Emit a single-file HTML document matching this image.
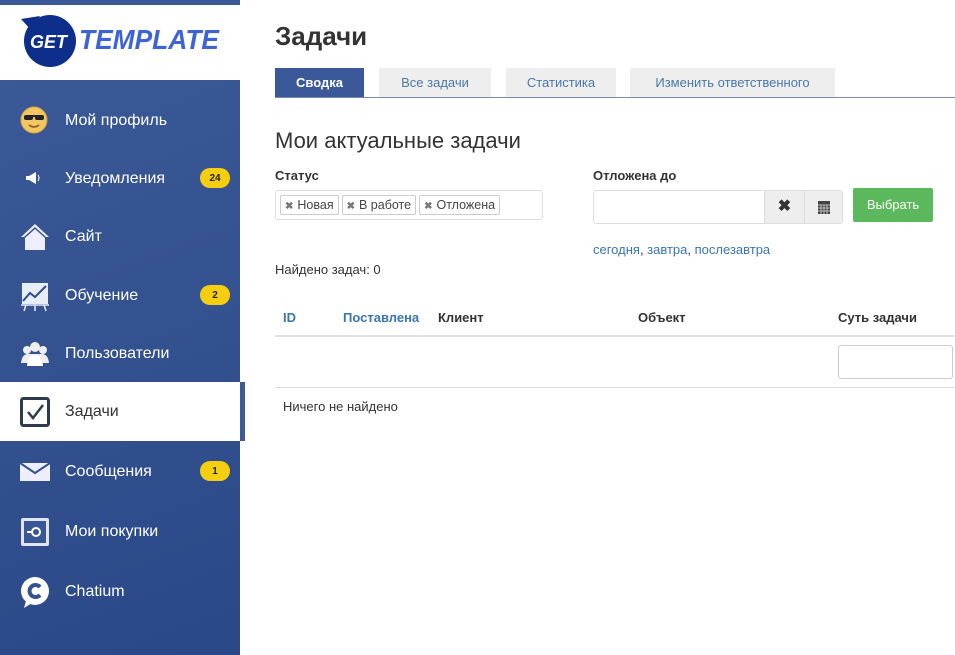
<!DOCTYPE html>
<html><head><meta charset="utf-8"><style>
*{margin:0;padding:0;box-sizing:border-box}
body{width:955px;height:655px;overflow:hidden;background:#fff;font-family:"Liberation Sans",sans-serif;position:relative}
#sb{position:absolute;left:0;top:0;width:240px;height:655px;background:linear-gradient(160deg,#3d5a99 0%,#34528f 50%,#2a4888 100%)}
#logo{position:absolute;left:0;top:5px;width:240px;height:75px;background:#fff}
.it{position:absolute;left:0;width:240px;height:59px;color:#fff;font-size:16px;line-height:59px;padding-left:65px}
.it svg{position:absolute;left:20px;top:15px}
.badge{position:absolute;left:200px;top:19px;width:30px;height:20px;border-radius:10px;background:#f5cf0f;color:#222;font-size:10px;font-weight:bold;display:block;line-height:22px;text-align:center}
.act{background:#fff;color:#333}
#main{position:absolute;left:275px;top:0;width:680px}
h1{position:absolute;top:21px;font-size:26px;font-weight:bold;color:#333}
.tab{position:absolute;top:68px;height:30px;line-height:30px;text-align:center;font-size:13px;background:#eee;color:#4a78a8}
.h2{position:absolute;top:128px;font-size:22px;color:#333}
.lbl{position:absolute;font-size:13px;font-weight:bold;color:#333}
.tag{display:inline-block;border:1px solid #ccc;border-radius:2px;padding:0 4px;height:20px;line-height:18px;font-size:12.5px;color:#444;margin-right:3px;background:#fff}
.tag b{color:#777;font-size:10px;margin-right:4px}
a{color:#3a75b0;text-decoration:none}
.th{position:absolute;top:310px;font-size:13px;font-weight:bold;color:#333}
</style></head><body>
<div id="sb">
<div id="logo">
<svg width="240" height="75" viewBox="0 0 240 75">
<circle cx="50" cy="36" r="26" fill="#0d2e8a"/>
<path d="M21 14 L40 11 L31 25 Z" fill="#0d2e8a"/>
<text x="30" y="43" font-family="Liberation Sans" font-weight="bold" font-style="italic" font-size="18" fill="#fff">GET</text>
<text x="79" y="44" font-family="Liberation Sans" font-weight="bold" font-style="italic" font-size="28" fill="#3e63d6" textLength="140" lengthAdjust="spacingAndGlyphs">TEMPLATE</text>
</svg></div>
<div class="it" style="top:91px"><svg width="28" height="28"><circle cx="14" cy="14" r="13" fill="#f2c661" stroke="#d9a441"/><rect x="4" y="9" width="9" height="5" rx="2" fill="#222"/><rect x="15" y="9" width="9" height="5" rx="2" fill="#222"/><rect x="10" y="9" width="8" height="2" fill="#222"/><path d="M9 19 Q14 23 19 19" stroke="#8a5a20" stroke-width="1.5" fill="none"/></svg>Мой профиль</div>
<div class="it" style="top:149px"><svg width="28" height="28"><rect x="6" y="12" width="3" height="4" fill="#fff"/><path d="M9 12 L16 8 L16 20 L9 16 Z" fill="#fff"/><path d="M18 11 Q20 14 18 17" stroke="#fff" fill="none"/></svg>Уведомления<span class="badge">24</span></div>
<div class="it" style="top:207px"><svg width="30" height="30"><path d="M15 2 L1 15 L4 15 L15 5 L26 15 L29 15 Z" fill="#eef"/><path d="M5 16 L15 7 L25 16 L25 28 L5 28 Z" fill="#eef"/></svg>Сайт</div>
<div class="it" style="top:266px"><svg width="30" height="32"><rect x="2" y="2" width="26" height="21" fill="#e8ecf5"/><path d="M3 20 L10 12 L15 16 L26 5" stroke="#2e4c8c" stroke-width="2" fill="none"/><path d="M1 24 L29 24 M6 24 L4 30 M15 24 L15 30 M24 24 L26 30" stroke="#e8ecf5" stroke-width="1.5"/></svg>Обучение<span class="badge">2</span></div>
<div class="it" style="top:324px"><svg width="30" height="28"><circle cx="15" cy="8" r="5" fill="#eee"/><circle cx="7" cy="11" r="4" fill="#eee"/><circle cx="23" cy="11" r="4" fill="#eee"/><path d="M1 24 Q2 15 8 15 L22 15 Q28 15 29 24 Z" fill="#eee"/><path d="M7 27 Q8 16 15 16 Q22 16 23 27 Z" fill="#fff"/></svg>Пользователи</div>
<div class="it act" style="top:382px"><svg width="30" height="30"><rect x="1.5" y="1.5" width="27" height="27" rx="2" fill="none" stroke="#2d3b4e" stroke-width="3"/><path d="M8 15 L13 21 L23 8" stroke="#2d3b4e" stroke-width="2.5" fill="none"/></svg>Задачи</div>
<div class="it" style="top:442px"><svg width="30" height="28"><rect x="0" y="6" width="30" height="18" fill="#eef"/><path d="M0 6 L15 16 L30 6" stroke="#34528f" stroke-width="2" fill="none"/></svg>Сообщения<span class="badge">1</span></div>
<div class="it" style="top:502px"><svg width="30" height="30"><rect x="1" y="1" width="28" height="28" rx="2" fill="#dfe5f1"/><rect x="4" y="4" width="22" height="22" fill="#3a5795"/><circle cx="16" cy="15" r="4" fill="none" stroke="#fff" stroke-width="2"/><path d="M7 15 L11 15" stroke="#fff" stroke-width="2"/></svg>Мои покупки</div>
<div class="it" style="top:562px"><svg width="30" height="32"><circle cx="15" cy="14" r="14" fill="#fff"/><path d="M6 24 L4 31 L12 26 Z" fill="#fff"/><path d="M20 10 A6 6 0 1 0 20 18" stroke="#34528f" stroke-width="4" fill="none"/></svg>Chatium</div>
</div>
<div style="position:absolute;left:0;top:0;width:240px;height:5px;background:#3b5998"></div>
<div style="position:absolute;left:240px;top:382px;width:5px;height:59px;background:#3d5a99"></div>
<div id="main">
<h1>Задачи</h1>
<div class="tab" style="left:0;width:89px;background:#3b5998;color:#fff;font-weight:bold">Сводка</div>
<div class="tab" style="left:104px;width:112px">Все задачи</div>
<div class="tab" style="left:231px;width:110px">Статистика</div>
<div class="tab" style="left:355px;width:205px">Изменить ответственного</div>
<div style="position:absolute;left:0;top:97px;width:680px;height:1px;background:#7a8aa5"></div>
<div class="h2">Мои актуальные задачи</div>
<div class="lbl" style="left:0;top:168px">Статус</div>
<div style="position:absolute;left:0;top:190px;width:268px;height:30px;border:1px solid #ddd;border-radius:3px;padding:4px"><span class="tag"><b>✖</b>Новая</span><span class="tag"><b>✖</b>В работе</span><span class="tag"><b>✖</b>Отложена</span></div>
<div class="lbl" style="left:318px;top:168px">Отложена до</div>
<div style="position:absolute;left:318px;top:190px;width:250px;height:34px;border:1px solid #ddd;border-radius:3px;overflow:hidden">
<div style="position:absolute;left:170px;top:0;width:40px;height:34px;background:#eee;border-left:1px solid #ddd;text-align:center;line-height:32px;font-size:16px;font-weight:bold;color:#333">✖</div>
<div style="position:absolute;left:210px;top:0;width:40px;height:34px;background:#eee;border-left:1px solid #ddd"><svg width="38" height="32"><rect x="13" y="10" width="12" height="13" fill="#444"/><path d="M13 14 H25 M13 17 H25 M13 20 H25 M16 14 V23 M19 14 V23 M22 14 V23" stroke="#ddd" stroke-width="0.8"/></svg></div></div>
<div style="position:absolute;left:578px;top:188px;width:80px;height:34px;background:#5cb85c;color:#fff;font-size:13px;line-height:34px;text-align:center;border-radius:2px">Выбрать</div>
<div style="position:absolute;left:318px;top:242px;font-size:13px;color:#333"><a>сегодня</a>, <a>завтра</a>, <a>послезавтра</a></div>
<div style="position:absolute;left:0;top:262px;font-size:13px;color:#333">Найдено задач: 0</div>
<div class="th" style="left:8px;color:#3a75b0">ID</div>
<div class="th" style="left:68px;color:#3a75b0">Поставлена</div>
<div class="th" style="left:163px">Клиент</div>
<div class="th" style="left:363px">Объект</div>
<div class="th" style="left:563px">Суть задачи</div>
<div style="position:absolute;left:0;top:335px;width:680px;height:2px;background:#e2e2e2"></div>
<div style="position:absolute;left:563px;top:345px;width:115px;height:34px;border:1px solid #ccc;border-radius:3px"></div>
<div style="position:absolute;left:0;top:387px;width:680px;height:1px;background:#ddd"></div>
<div style="position:absolute;left:8px;top:399px;font-size:13px;color:#333">Ничего не найдено</div>
</div>
</body></html>
